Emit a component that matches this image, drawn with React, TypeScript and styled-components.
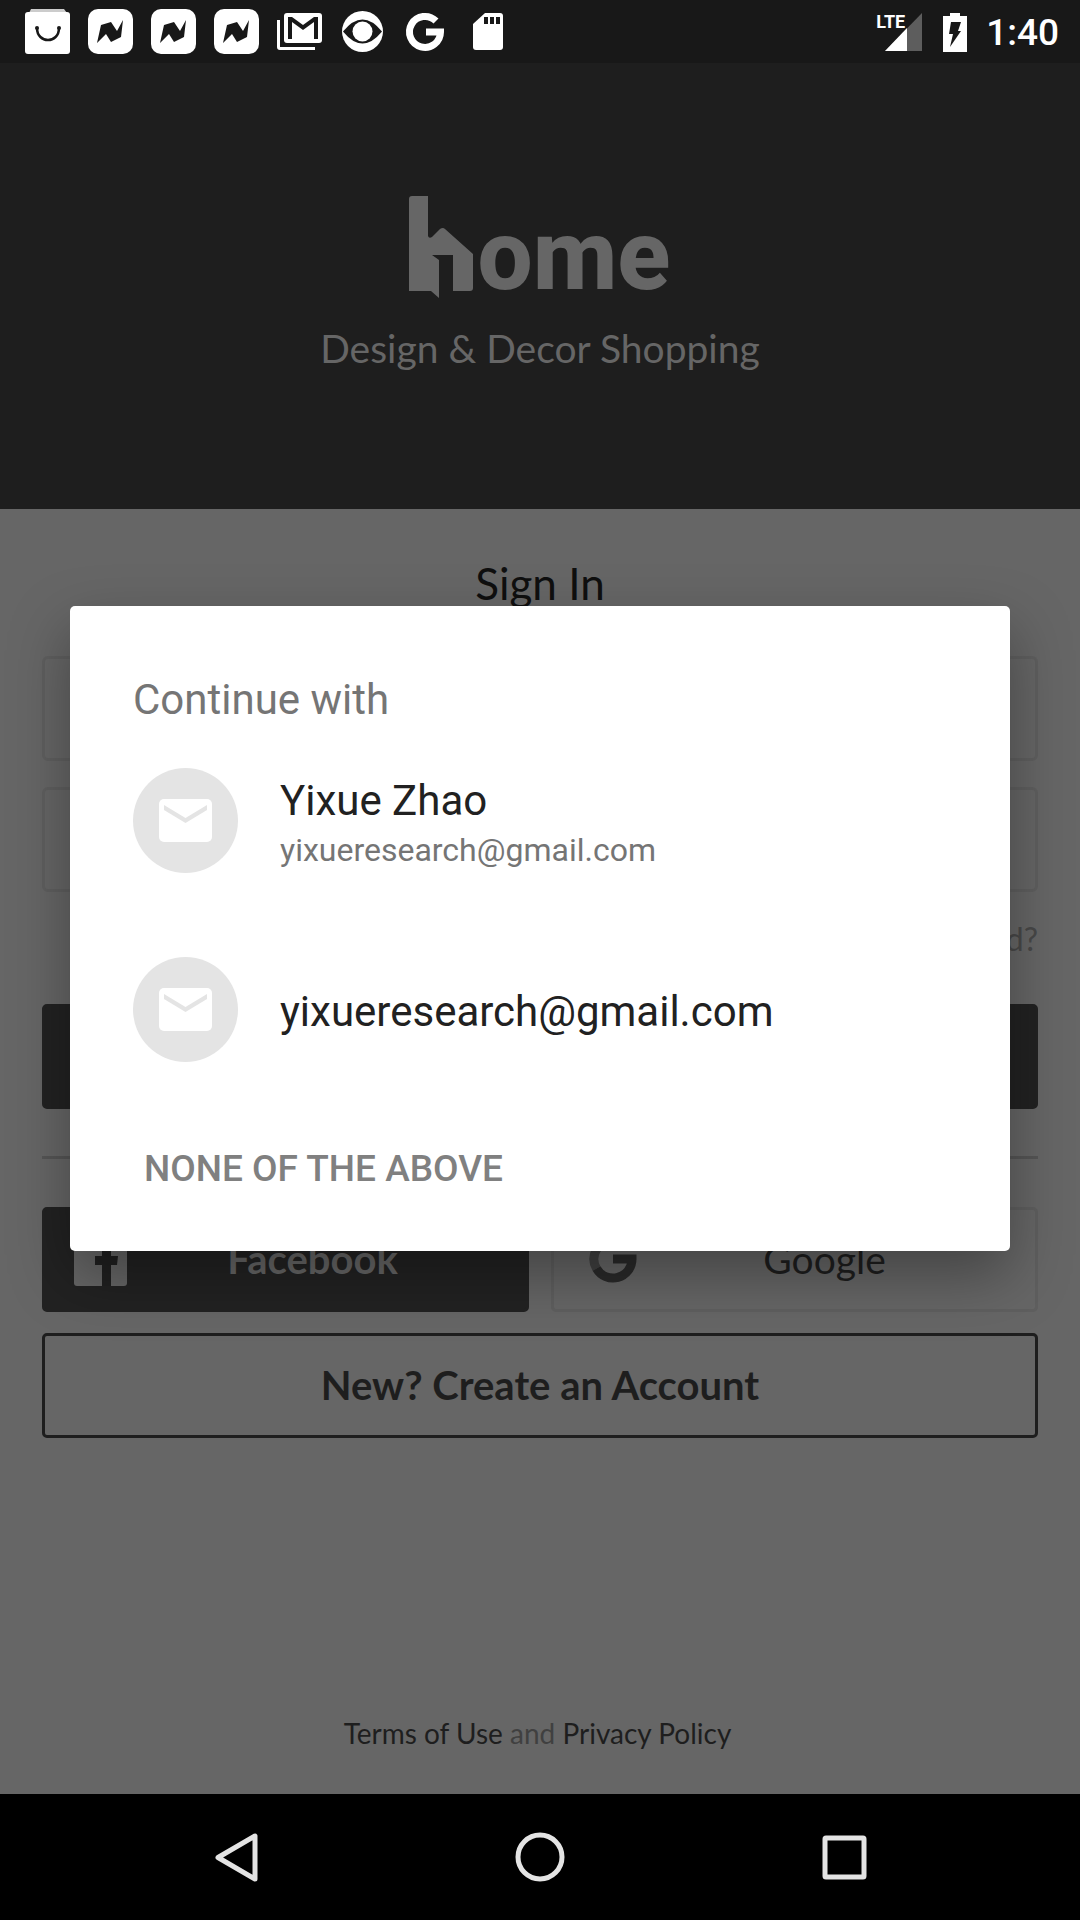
import React from "react";
import styled, { createGlobalStyle } from "styled-components";

const brandFont = `"Lato", "Open Sans", sans-serif`;
const systemFont = `"Roboto", "Noto Sans", sans-serif`;

const GlobalStyle = createGlobalStyle`
  * { box-sizing: border-box; }
  html, body { margin: 0; background: #666; }
  button, input { font: inherit; }
`;

const Screen = styled.div`
  display: flex;
  flex-direction: column;
  min-height: 100vh;
  font-family: ${systemFont};
`;

const StatusBar = styled.header`
  display: flex;
  align-items: center;
  height: 63px;
  padding: 0 21px 0 25px;
  background: #181818;
  color: #fff;
`;

const Notifications = styled.div`
  display: flex;
  flex: 1;
  gap: 18px;
`;

const StatusIcon = styled.svg`
  display: block;
  width: 45px;
  height: 45px;
  fill: #fff;
`;

const Signal = styled.div`
  display: flex;
  position: relative;
  margin-right: 20px;
`;

const SignalIcon = styled.svg`
  width: 46px;
  height: 40px;
`;

const NetworkType = styled.span`
  position: absolute;
  top: 0;
  left: 0;
  font-size: 18px;
  font-weight: 700;
  line-height: 20px;
`;

const BatteryIcon = styled.svg`
  width: 26px;
  height: 40px;
`;

const Clock = styled.time`
  margin-left: 18px;
  padding-top: 2px;
  font-size: 37px;
  font-weight: 500;
  line-height: 44px;
`;

const Stage = styled.main`
  display: flex;
  flex: 1;
  flex-direction: column;
  position: relative;
  font-family: ${brandFont};
`;

const Hero = styled.section`
  display: flex;
  flex-direction: column;
  align-items: center;
  height: 446px;
  padding-top: 133px;
  background: #1e1e1e;
  color: #666;
`;

const Logo = styled.h1`
  display: flex;
  align-items: flex-start;
  gap: 4px;
  height: 102px;
  margin: 0;
`;

const LogoHouse = styled.svg`
  width: 64px;
  height: 102px;
  fill: #666;
`;

const LogoWord = styled.span`
  font-family: ${systemFont};
  font-size: 98px;
  font-weight: 800;
  line-height: 120px;
`;

const Tagline = styled.p`
  margin: 26px 0 0;
  font-size: 39px;
  line-height: 48px;
`;

const Form = styled.form`
  display: flex;
  flex: 1;
  flex-direction: column;
  padding: 48px 42px 40px;
`;

const Title = styled.h2`
  margin: 0 0 47px;
  color: #0f0f0f;
  font-size: 44px;
  font-weight: 400;
  line-height: 52px;
  text-align: center;
`;

const Field = styled.input`
  width: 100%;
  height: 105px;
  margin-bottom: 26px;
  padding: 0 30px;
  border: 3px solid #5f5f5f;
  border-radius: 6px;
  background: transparent;
  color: #1e1e1e;
`;

const ForgotLink = styled.a`
  align-self: flex-end;
  margin: 0 0 44px;
  color: #484848;
  font-size: 32px;
  line-height: 42px;
  text-decoration: none;
`;

const borderColors = { solid: "#222", light: "#5f5f5f", outline: "#1e1e1e" };

const Button = styled.button<{ $kind: "solid" | "light" | "outline" }>`
  display: flex;
  flex: 1 0 auto;
  align-items: center;
  justify-content: center;
  height: 105px;
  padding: 0 29px 2px ${(p) => (p.$kind === "light" ? "35px" : "29px")};
  border: 3px solid ${(p) => borderColors[p.$kind]};
  border-radius: 5px;
  background: ${(p) => (p.$kind === "solid" ? "#222" : "transparent")};
  color: ${(p) => (p.$kind === "solid" ? "#666" : "#1e1e1e")};
  font-size: ${(p) => (p.$kind === "light" ? "39px" : "40px")};
  font-weight: ${(p) => (p.$kind === "light" ? 400 : 700)};
  line-height: 48px;
`;

const ButtonRow = styled.div`
  display: flex;
`;

const Divider = styled.hr`
  width: 100%;
  height: 3px;
  margin: 47px 0 48px;
  border: 0;
  background: #555;
`;

const Providers = styled.div`
  display: grid;
  grid-template-columns: 1fr 1fr;
  gap: 22px;
  margin-bottom: 21px;
`;

const ProviderIcon = styled.svg`
  width: 54px;
  height: 54px;
`;

const ProviderName = styled.span`
  flex: 1;
  text-align: center;
`;

const Legal = styled.p`
  margin: auto 0 0;
  padding-right: 5px;
  color: #404040;
  font-size: 28px;
  line-height: 42px;
  text-align: center;
`;

const LegalLink = styled.a`
  color: #1e1e1e;
  text-decoration: none;
`;

const Overlay = styled.div`
  display: flex;
  position: absolute;
  inset: 0;
  align-items: center;
  padding: 0 70px;
  font-family: ${systemFont};
`;

const Dialog = styled.section`
  flex: 1;
  padding: 67px 63px 47px;
  border-radius: 5px;
  background: #fff;
  box-shadow: 0 24px 60px rgba(0, 0, 0, 0.34);
`;

const DialogTitle = styled.h2`
  margin: 0 0 41px;
  color: #757575;
  font-size: 42px;
  font-weight: 400;
  line-height: 54px;
`;

const Accounts = styled.div`
  display: flex;
  flex-direction: column;
  gap: 84px;
`;

const Account = styled.button`
  display: flex;
  align-items: center;
  gap: 42px;
  width: 100%;
  height: 105px;
  padding: 0;
  border: 0;
  background: none;
  text-align: left;
`;

const Avatar = styled.svg`
  flex: none;
  width: 105px;
  height: 105px;
`;

const AccountText = styled.span`
  display: flex;
  flex-direction: column;
  padding-top: 4px;
`;

const AccountName = styled.span`
  color: #212121;
  font-size: 42px;
  line-height: 54px;
`;

const AccountEmail = styled.span`
  color: #757575;
  font-size: 32px;
  line-height: 44px;
`;

const NoneButton = styled.button`
  display: block;
  margin-top: 72px;
  padding: 0 11px;
  border: 0;
  background: none;
  color: #808080;
  font-size: 37px;
  font-weight: 500;
  line-height: 70px;
`;

const NavBar = styled.nav`
  display: flex;
  align-items: center;
  justify-content: space-between;
  height: 126px;
  padding: 0 204px;
  background: #000;
`;

const NavButton = styled.button`
  padding: 0;
  border: 0;
  background: none;
`;

const NavIcon = styled.svg`
  display: block;
  width: 64px;
  height: 64px;
  fill: none;
  stroke: #e4e4e4;
  stroke-width: 5;
  stroke-linejoin: round;
`;

const NewsBolt = () => (
  <StatusIcon viewBox="0 0 45 45">
    <rect width="45" height="45" rx="10" />
    <path fill="#181818" d="M9 34 13 16 23 13 29 22 35 11 33 28 23 33 18 25z" />
  </StatusIcon>
);

const MailAvatar = () => (
  <Avatar viewBox="0 0 105 105">
    <circle cx="52.5" cy="52.5" r="52.5" fill="#e4e4e4" />
    <rect x="26" y="31" width="53" height="43" rx="5" fill="#fff" />
    <path fill="#e4e4e4" d="M31 37 52.5 50 74 37v5L52.5 55 31 42z" />
  </Avatar>
);

export default function App() {
  return (
    <Screen>
      <GlobalStyle />
      <StatusBar>
        <Notifications>
          <StatusIcon viewBox="0 0 45 45">
            <path fill="#ccc" d="M4 4 6 0h33l3 4z" />
            <rect y="3" width="45" height="42" rx="3" />
            <path
              fill="none"
              stroke="#181818"
              strokeWidth="2.5"
              d="M12 19c0 16 22 16 22 0"
            />
            <circle cx="12" cy="19" r="2" fill="#181818" />
            <circle cx="34" cy="19" r="2" fill="#181818" />
          </StatusIcon>
          <NewsBolt />
          <NewsBolt />
          <NewsBolt />
          <StatusIcon viewBox="0 0 45 45">
            <path d="M0 11h3v27h35v3H3q-3 0-3-3z" />
            <rect x="7" y="4" width="38" height="30" rx="3" />
            <path fill="#181818" d="M11 8h4l11 8 11-8h4v22h-4V13l-11 8-11-8v17h-4z" />
          </StatusIcon>
          <StatusIcon viewBox="0 0 45 45">
            <circle cx="22.5" cy="22.5" r="20.5" />
            <path fill="#181818" d="M3 22.5q19.500-24 39 0q-19.500 24-39 0" />
            <circle cx="22.5" cy="22.5" r="10" />
          </StatusIcon>
          <StatusIcon viewBox="0 0 45 45">
            <path
              fill="none"
              stroke="#fff"
              strokeWidth="7"
              d="M33 12A15.5 15.5 0 1 0 37.5 23H23"
            />
          </StatusIcon>
          <StatusIcon viewBox="0 0 45 45">
            <path d="M19 4h15q3 0 3 3v31q0 3-3 3H10q-3 0-3-3V15z" />
            <path fill="#181818" d="M18 8h4v7h-4zM24 8h4v7h-4zM30 8h4v7h-4z" />
          </StatusIcon>
        </Notifications>
        <Signal>
          <SignalIcon viewBox="0 0 46 40">
            <path fill="#5d5d5d" d="M46 1v38H9z" />
            <path fill="#fff" d="M31 16v23H9z" />
          </SignalIcon>
          <NetworkType>LTE</NetworkType>
        </Signal>
        <BatteryIcon viewBox="0 0 26 40">
          <path fill="#fff" d="M8 1h10v3h7v36H1V4h7z" />
          <path fill="#181818" d="M9 10h10l-3 9h3L8 35l3-13H7z" />
        </BatteryIcon>
        <Clock>1:40</Clock>
      </StatusBar>

      <Stage>
        <Hero>
          <Logo aria-label="home">
            <LogoHouse viewBox="0 0 64 102">
              <path d="M3 0h16v40q1 3 4 1l8-8q3-2 5 0l28 25v34q0 3-3 3H44V59H23l7 5v38l-8-7H0V3q0-3 3-3z" />
            </LogoHouse>
            <LogoWord>ome</LogoWord>
          </Logo>
          <Tagline>Design &amp; Decor Shopping</Tagline>
        </Hero>

        <Form onSubmit={(e) => e.preventDefault()}>
          <Title>Sign In</Title>
          <Field type="email" aria-label="Email" />
          <Field type="password" aria-label="Password" />
          <ForgotLink href="#forgot">Forgot Password?</ForgotLink>
          <ButtonRow>
            <Button $kind="solid" type="submit" aria-label="Sign In" />
          </ButtonRow>
          <Divider />
          <Providers>
            <Button $kind="solid" type="button">
              <ProviderIcon viewBox="0 0 54 54">
                <rect width="53" height="54" rx="3" fill="#666" />
                <path
                  fill="#202020"
                  d="M28 54V33h-7v-9h7v-7q0-10 10-10h7v8h-4q-4 0-4 4v5h7l-1 9h-6v21z"
                />
              </ProviderIcon>
              <ProviderName>Facebook</ProviderName>
            </Button>
            <Button $kind="light" type="button">
              <ProviderIcon viewBox="0 0 54 54">
                <g fill="none" strokeWidth="9">
                  <path stroke="#333" d="M37 13A19 19 0 0 0 7.500 17.500" />
                  <path stroke="#414141" d="M7.500 17.500A19 19 0 0 0 7.500 36.500" />
                  <path stroke="#2a2a2a" d="M7.500 36.500A19 19 0 0 0 43 27H24" />
                </g>
              </ProviderIcon>
              <ProviderName>Google</ProviderName>
            </Button>
          </Providers>
          <ButtonRow>
            <Button $kind="outline" type="button">
              New? Create an Account
            </Button>
          </ButtonRow>
          <Legal>
            <LegalLink href="#terms">Terms of Use</LegalLink> and{" "}
            <LegalLink href="#privacy">Privacy Policy</LegalLink>
          </Legal>
        </Form>

        <Overlay>
          <Dialog role="dialog" aria-labelledby="dialog-title">
            <DialogTitle id="dialog-title">Continue with</DialogTitle>
            <Accounts>
              <Account type="button">
                <MailAvatar />
                <AccountText>
                  <AccountName>Yixue Zhao</AccountName>
                  <AccountEmail>yixueresearch@gmail.com</AccountEmail>
                </AccountText>
              </Account>
              <Account type="button">
                <MailAvatar />
                <AccountText>
                  <AccountName>yixueresearch@gmail.com</AccountName>
                </AccountText>
              </Account>
            </Accounts>
            <NoneButton type="button">NONE OF THE ABOVE</NoneButton>
          </Dialog>
        </Overlay>
      </Stage>

      <NavBar>
        <NavButton type="button" aria-label="Back">
          <NavIcon viewBox="0 0 64 64">
            <path d="M51 11v43L14 32.5z" />
          </NavIcon>
        </NavButton>
        <NavButton type="button" aria-label="Home">
          <NavIcon viewBox="0 0 64 64">
            <circle cx="32" cy="32" r="22" />
          </NavIcon>
        </NavButton>
        <NavButton type="button" aria-label="Recent apps">
          <NavIcon viewBox="0 0 64 64">
            <rect x="13" y="13" width="39" height="39" rx="1" />
          </NavIcon>
        </NavButton>
      </NavBar>
    </Screen>
  );
}
